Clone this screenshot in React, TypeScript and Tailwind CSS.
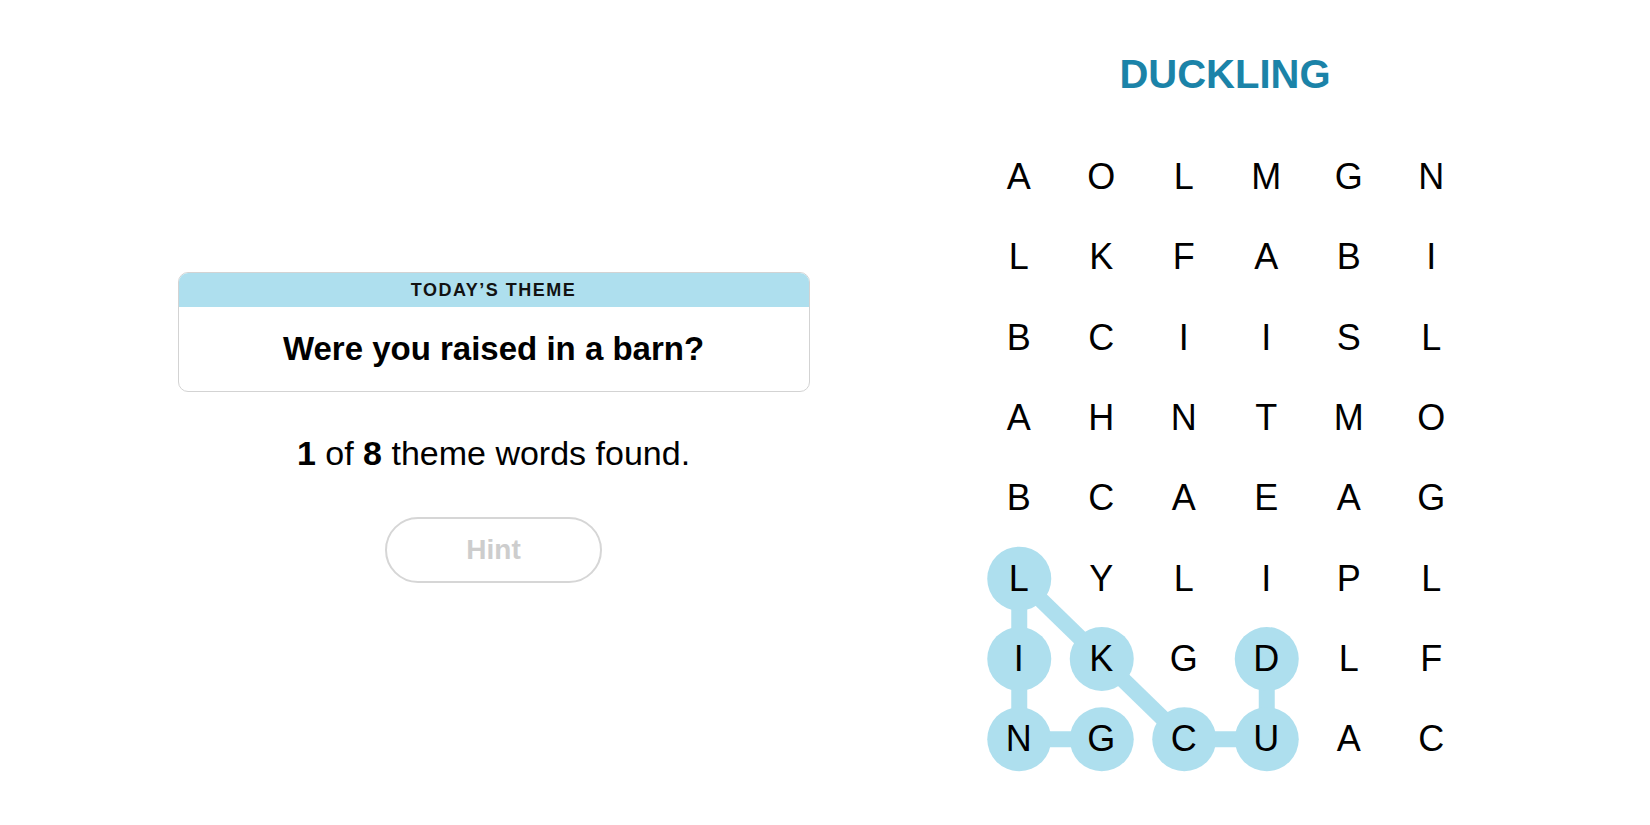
import React from 'react';

const GRID = [
  ['A', 'O', 'L', 'M', 'G', 'N'],
  ['L', 'K', 'F', 'A', 'B', 'I'],
  ['B', 'C', 'I', 'I', 'S', 'L'],
  ['A', 'H', 'N', 'T', 'M', 'O'],
  ['B', 'C', 'A', 'E', 'A', 'G'],
  ['L', 'Y', 'L', 'I', 'P', 'L'],
  ['I', 'K', 'G', 'D', 'L', 'F'],
  ['N', 'G', 'C', 'U', 'A', 'C'],
];

// DUCKLING, in the order it was traced
const WORD: [number, number][] = [
  [6, 3], [7, 3], [7, 2], [6, 1], [5, 0], [6, 0], [7, 0], [7, 1],
];

const CELL_W = 82.5;
const CELL_H = 80.3;
const HILITE = '#aedfee';

const cx = (c: number) => CELL_W / 2 + c * CELL_W;
const cy = (r: number) => CELL_H / 2 + r * CELL_H;

const WordTrace: React.FC = () => (
  <svg className="absolute inset-0" width={CELL_W * 6} height={CELL_H * 8}>
    {WORD.slice(1).map(([r, c], i) => {
      const [pr, pc] = WORD[i];
      return (
        <line
          key={`l-${i}`}
          x1={cx(pc)}
          y1={cy(pr)}
          x2={cx(c)}
          y2={cy(r)}
          stroke={HILITE}
          strokeWidth={16}
        />
      );
    })}
    {WORD.map(([r, c]) => (
      <circle key={`c-${r}-${c}`} cx={cx(c)} cy={cy(r)} r={32} fill={HILITE} />
    ))}
  </svg>
);

export default function App() {
  return (
    <div className="w-full h-[825px] bg-white flex justify-center font-['Liberation_Sans',Arial,sans-serif] text-black">
      <div className="w-[1295px] flex justify-between">
        {/* Left: theme card + progress */}
        <div className="w-[632px] flex flex-col items-center pt-[272px]">
          <div className="w-full rounded-[10px] border border-[#d3d3d3] overflow-hidden">
            <div className="h-[34px] bg-[#aedfee] flex items-center justify-center text-[18px] font-semibold tracking-[1.5px] text-[#121212]">
              TODAY’S THEME
            </div>
            <div className="h-[84px] flex items-center justify-center text-[33px] font-bold">
              Were you raised in a barn?
            </div>
          </div>

          <p className="mt-[40px] text-[34px] leading-[42px]">
            <span className="font-bold">1</span> of <span className="font-bold">8</span> theme words found.
          </p>

          <button className="mt-[43px] w-[217px] h-[66px] rounded-full border-2 border-[#d6d6d6] text-[28px] font-bold text-[#cdcdcd]">
            Hint
          </button>
        </div>

        {/* Right: board */}
        <div className="w-[495px] flex flex-col items-center">
          <h1 className="mt-[50px] text-[40px] leading-[48px] font-bold text-[#1b83a8]">DUCKLING</h1>

          <div className="relative mt-[39px] w-[495px]">
            <WordTrace />
            <div className="relative grid grid-cols-6">
              {GRID.map((row, r) =>
                row.map((ch, c) => (
                  <div
                    key={`${r}-${c}`}
                    className="h-[80.3px] flex items-center justify-center text-[36px] leading-none"
                  >
                    {ch}
                  </div>
                ))
              )}
            </div>
          </div>
        </div>
      </div>
    </div>
  );
}
